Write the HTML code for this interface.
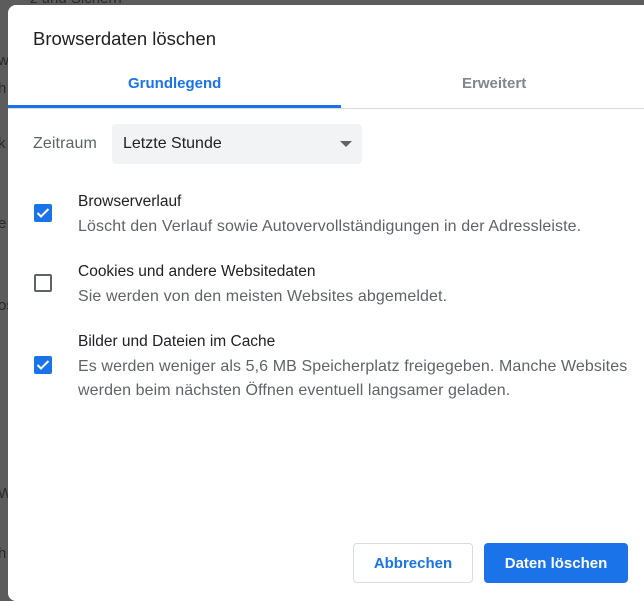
<!DOCTYPE html>
<html><head><meta charset="utf-8"><style>
html,body{margin:0;width:644px;height:601px;overflow:hidden}
body{background:#5c5c5c;font-family:"Liberation Sans",Arial,sans-serif;position:relative}
.bgt{position:absolute;color:#2a2a2a;font-size:15px}
.dlg{position:absolute;left:8px;top:5px;width:700px;height:596px;background:#fff;border-radius:8px 8px 0 8px;overflow:hidden}
.a{position:absolute;white-space:nowrap}
.cb{position:absolute;left:26px;width:18px;height:18px;border-radius:2px;background:#1a73e8}
.cb svg{position:absolute;left:2px;top:3px}
.cbe{background:#fff;border:2px solid #5f6368;width:14px;height:14px}
.h{font-size:15.5px;color:#202124}
.s{font-size:16px;color:#5f6368;letter-spacing:0.1px}
</style></head><body>
<div class="bgt" style="left:30px;top:-10px">z und Sichern</div>
<div class="bgt" style="left:-2px;top:52px">w</div>
<div class="bgt" style="left:-2px;top:80px">h</div>
<div class="bgt" style="left:-2px;top:135px">k</div>
<div class="bgt" style="left:-2px;top:215px">e</div>
<div class="bgt" style="left:-2px;top:297px">os</div>
<div class="bgt" style="left:-2px;top:485px">W</div>
<div class="bgt" style="left:-2px;top:545px">h</div>
<div class="dlg">
<div class="a" style="left:25px;top:23px;font-size:18.5px;color:#202124">Browserdaten löschen</div>
<div class="a" style="left:120px;top:70px;font-size:15px;font-weight:bold;color:#1a73e8">Grundlegend</div>
<div class="a" style="left:454px;top:70px;font-size:15px;font-weight:bold;color:#80868b">Erweitert</div>
<div class="a" style="left:0;top:100px;width:333px;height:3px;background:#1a73e8"></div>
<div class="a" style="left:0;top:103px;width:700px;height:1px;background:#dadce0"></div>
<div class="a s" style="left:25px;top:130px">Zeitraum</div>
<div class="a" style="left:104px;top:119px;width:250px;height:40px;background:#f1f3f4;border-radius:4px"></div>
<div class="a" style="left:115px;top:130px;font-size:16px;color:#202124">Letzte Stunde</div>
<div class="a" style="left:332px;top:136px;width:0;height:0;border-left:6px solid transparent;border-right:6px solid transparent;border-top:6px solid #5f6368"></div>

<div class="cb" style="top:199px"><svg width="14" height="12" viewBox="0 0 14 12"><path d="M1.5 6 L5 9.5 L12.5 2" fill="none" stroke="#fff" stroke-width="2"/></svg></div>
<div class="a h" style="left:70px;top:188px">Browserverlauf</div>
<div class="a s" style="left:70px;top:213px">Löscht den Verlauf sowie Autovervollständigungen in der Adressleiste.</div>

<div class="cb cbe" style="top:269px"></div>
<div class="a h" style="left:70px;top:258px">Cookies und andere Websitedaten</div>
<div class="a s" style="left:70px;top:283px">Sie werden von den meisten Websites abgemeldet.</div>

<div class="cb" style="top:351px"><svg width="14" height="12" viewBox="0 0 14 12"><path d="M1.5 6 L5 9.5 L12.5 2" fill="none" stroke="#fff" stroke-width="2"/></svg></div>
<div class="a h" style="left:70px;top:328px">Bilder und Dateien im Cache</div>
<div class="a s" style="left:70px;top:353px">Es werden weniger als 5,6 MB Speicherplatz freigegeben. Manche Websites</div>
<div class="a s" style="left:70px;top:377px">werden beim nächsten Öffnen eventuell langsamer geladen.</div>

<div class="a" style="left:345px;top:538px;width:118px;height:38px;border:1px solid #dadce0;border-radius:4px;color:#1a73e8;font-weight:bold;font-size:15px;text-align:center;line-height:39px">Abbrechen</div>
<div class="a" style="left:476px;top:538px;width:144px;height:40px;background:#1a73e8;border-radius:4px;color:#fff;font-weight:bold;font-size:15px;text-align:center;line-height:41px">Daten löschen</div>
</div>
</body></html>
